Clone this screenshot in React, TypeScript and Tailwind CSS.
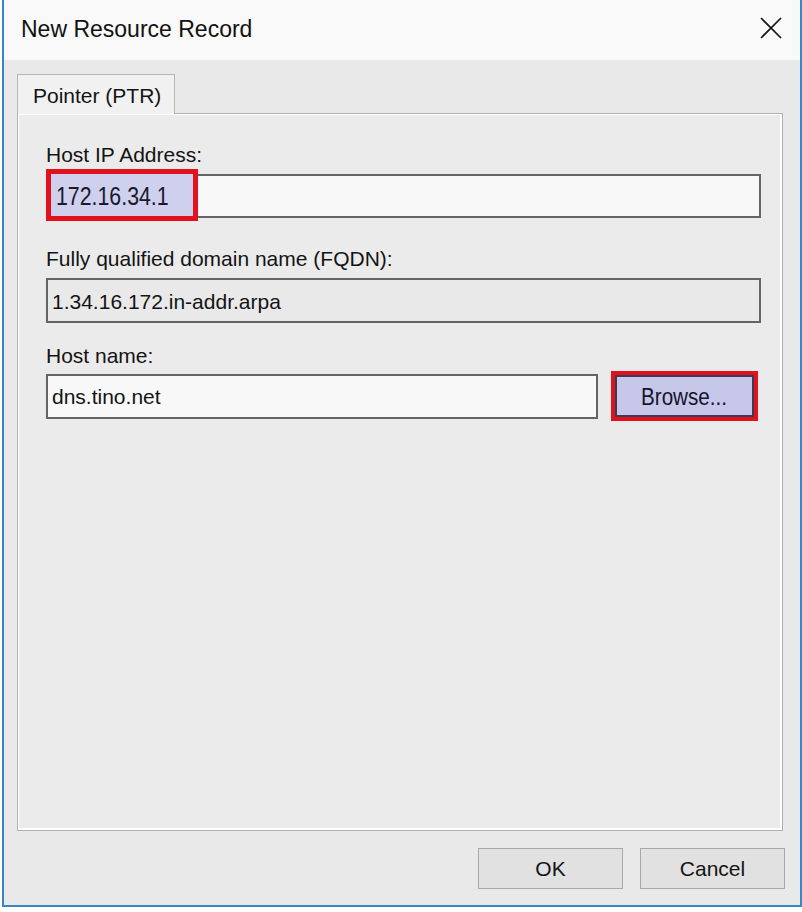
import React from "react";

const font = { fontFamily: '"Liberation Sans", Arial, sans-serif' };

function Label({ children, className = "" }: { children: React.ReactNode; className?: string }) {
  return <div className={"text-[21px] leading-[24px] text-[#141414] " + className}>{children}</div>;
}

export default function App() {
  return (
    <div className="w-[802px] h-[912px] bg-white overflow-hidden" style={font}>
      <div className="ml-[2px] w-[800px] h-[907px] border-x-2 border-b-2 border-[#3a86c4] flex flex-col">
        {/* Title bar */}
        <div className="h-[60px] bg-[#f9f9f9] flex items-center justify-between pl-[17px] pr-[18px] shrink-0">
          <span className="text-[23px] text-[#111] mt-[-2px]">New Resource Record</span>
          <svg width="22" height="22" viewBox="0 0 22 22" className="mt-[-4px]">
            <path d="M1 1 L21 21 M21 1 L1 21" stroke="#111" strokeWidth="1.6" fill="none" />
          </svg>
        </div>
        {/* Body */}
        <div className="flex-1 bg-[#eae9e9] pt-[14px] pl-[13px] pr-[12px] flex flex-col">
          <div className="flex">
            <div className="w-[158px] h-[40px] border border-b-0 border-[#b5b5b5] bg-[#f1f1f1] pl-[15px] flex items-center relative z-10 mb-[-1px]">
              <span className="text-[21px] text-[#141414] mt-[2px]">Pointer (PTR)</span>
            </div>
          </div>
          <div className="w-[766px] h-[718px] border border-[#b0b0b0] bg-[#ebebeb] shadow-[inset_1px_1px_0_#ffffff,inset_-2px_-2px_0_#ffffff] pt-[29px] pl-[28px] pr-[21px] flex flex-col">
            <Label>Host IP Address:</Label>
            <div className="mt-[7px] h-[44px] border-2 border-[#646464] bg-[#f8f8f8] relative">
              <div className="absolute left-[-2px] top-[-7px] w-[152px] h-[52px] border-[5px] border-[#e1121c] bg-[#cfcfee] flex items-center pl-[5px]">
                <span className="inline-block text-[26px] text-[#1a1a2a] origin-left scale-x-[0.82] mt-[3px]">172.16.34.1</span>
              </div>
            </div>
            <Label className="mt-[29px]">Fully qualified domain name (FQDN):</Label>
            <div className="mt-[7px] h-[45px] border-2 border-[#646464] bg-[#e9e9e9] flex items-center pl-[4px]">
              <span className="text-[21px] text-[#141414] mt-[2px]">1.34.16.172.in-addr.arpa</span>
            </div>
            <Label className="mt-[21px]">Host name:</Label>
            <div className="mt-[3px] flex items-center">
              <div className="w-[552px] h-[45px] border-2 border-[#646464] bg-[#f8f8f8] flex items-center pl-[4px]">
                <span className="text-[21px] text-[#141414] mt-[2px]">dns.tino.net</span>
              </div>
              <div className="ml-[13px] w-[147px] h-[50px] border-[4px] border-[#e1121c] bg-[#e1121c] flex">
                <div className="flex-1 border-2 border-[#3a3a5a] bg-[#c7c7ea] flex items-center justify-center">
                  <span className="inline-block text-[24px] text-[#14142a] scale-x-[0.86] mt-[2px]">Browse...</span>
                </div>
              </div>
            </div>
          </div>
          <div className="mt-[17px] pr-[3px] flex justify-end gap-[17px]">
            <div className="w-[145px] h-[41px] border border-[#a8a8a8] bg-[#e1e1e1] flex items-center justify-center">
              <span className="text-[21px] text-[#141414]">OK</span>
            </div>
            <div className="w-[145px] h-[41px] border border-[#a8a8a8] bg-[#e1e1e1] flex items-center justify-center">
              <span className="text-[21px] text-[#141414]">Cancel</span>
            </div>
          </div>
        </div>
      </div>
    </div>
  );
}
